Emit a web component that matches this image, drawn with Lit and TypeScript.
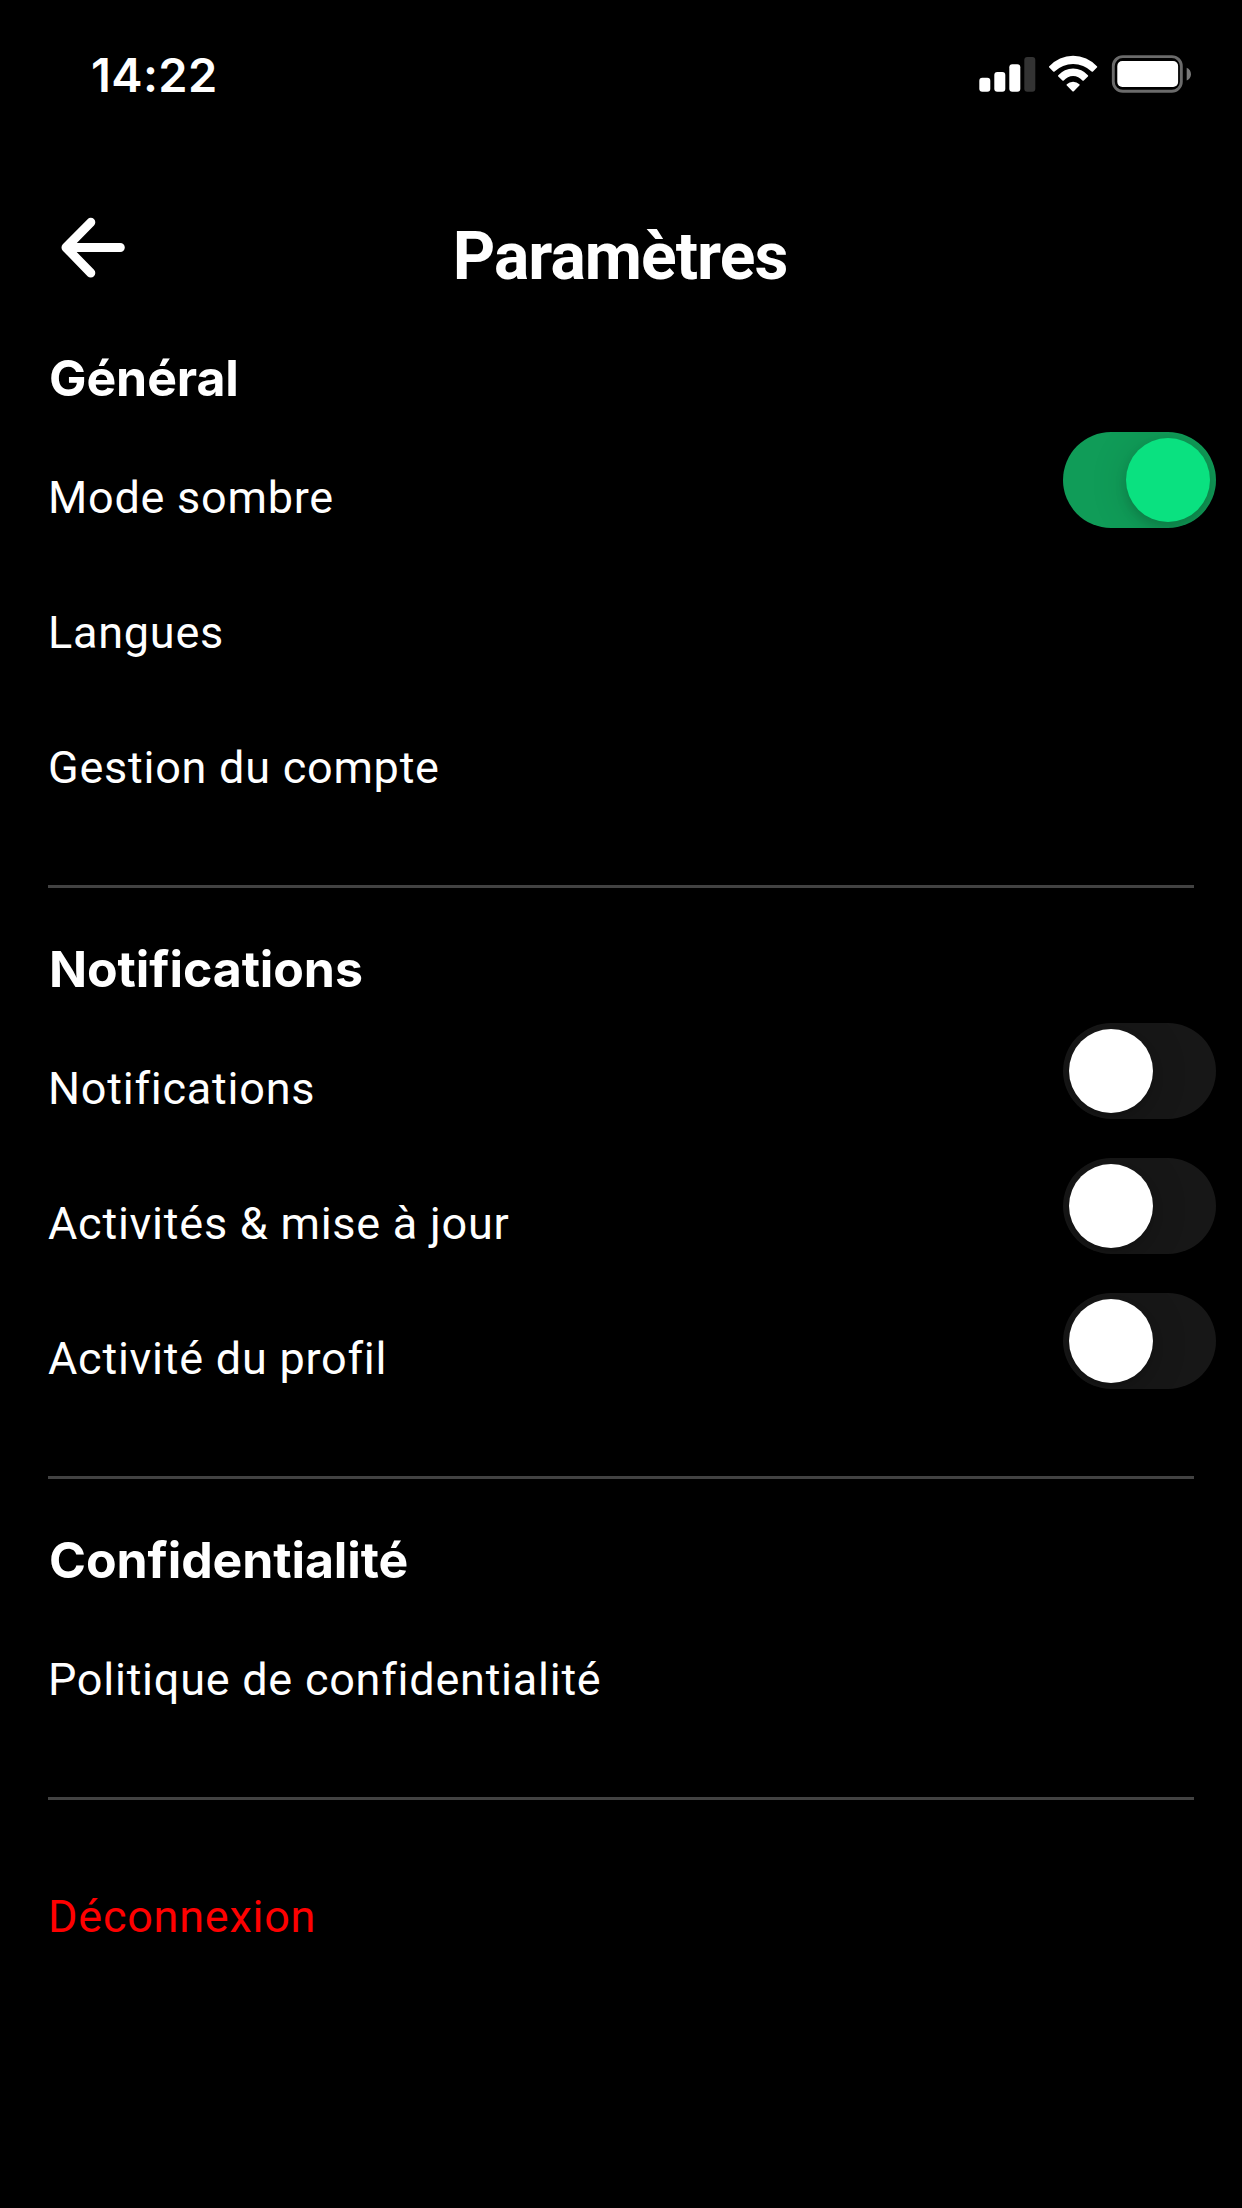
import { LitElement, html, css, nothing } from "lit";
import { customElement, property, state } from "lit/decorators.js";
import { classMap } from "lit/directives/class-map.js";

interface Item {
  label: string;
  on?: boolean;
}

interface Section {
  title: string;
  items: Item[];
}

@customElement("status-bar")
class StatusBar extends LitElement {
  static styles = css`
    :host {
      display: flex;
      justify-content: space-between;
      height: 180px;
      padding: 0 48px 0 91px;
    }
    .time {
      font: 600 47px/60px Inter, sans-serif;
      padding-top: 45px;
      letter-spacing: 0.4px;
    }
    .icons {
      width: 222px;
      height: 48px;
      padding-top: 50px;
      display: block;
    }
  `;

  render() {
    return html`
      <div class="time">14:22</div>
      <svg class="icons" viewBox="972 50 222 48" fill="#fff">
        <rect x="979.3" y="77.8" width="11" height="14" rx="3" />
        <rect x="994.3" y="72" width="11" height="19.800" rx="3" />
        <rect x="1009.3" y="64.200" width="11" height="27.600" rx="3" />
        <rect x="1024.3" y="57" width="11" height="34.800" rx="3" fill="#333" />
        <path d="M1049.3 66.3a32 32 0 0 1 47.6 0a.9.9 0 0 1 0 1.3l-3.9 3.9a1 1 0 0 1-1.4 0a26.8 26.8 0 0 0-37 0a1 1 0 0 1-1.4 0l-3.9-3.9a.9.9 0 0 1 0-1.3z" />
        <path d="M1058.300 75.200a19.500 19.500 0 0 1 29.600 0a.9.9 0 0 1 0 1.300l-4.100 4a1 1 0 0 1-1.400 0a12 12 0 0 0-18.600 0a1 1 0 0 1-1.400 0l-4.100-4a.9.9 0 0 1 0-1.300z" />
        <path d="M1066.800 84.200a9 9 0 0 1 12.600 0a.9.9 0 0 1 0 1.300l-5.600 5.700a1 1 0 0 1-1.400 0l-5.600-5.700a.9.9 0 0 1 0-1.300z" />
        <rect x="1113.300" y="56.600" width="68" height="34.700" rx="9.500" fill="none" stroke="#6b6b6b" stroke-width="2.900" />
        <rect x="1117.300" y="61" width="60.800" height="26" rx="5" />
        <path d="M1186.700 67.800c2.700 1.100 4.300 3.600 4.300 6.400s-1.600 5.300-4.300 6.400z" fill="#777" />
      </svg>
    `;
  }
}

@customElement("toggle-switch")
class ToggleSwitch extends LitElement {
  @property({ type: Boolean }) on = false;

  static styles = css`
    :host {
      display: block;
    }
    .track {
      box-sizing: border-box;
      display: flex;
      width: 153px;
      height: 96px;
      padding: 6px;
      border-radius: 48px;
      background: #171717;
      overflow: hidden;
    }
    .track.on {
      justify-content: flex-end;
      background: #109c58;
    }
    .thumb {
      width: 84px;
      height: 84px;
      border-radius: 50%;
      background: #fff;
      box-shadow: 0 6px 12px rgba(0, 0, 0, 0.15), 0 3px 40px rgba(0, 0, 0, 0.12);
    }
    .on .thumb {
      background: #0ae180;
    }
  `;

  render() {
    return html`<div class=${classMap({ track: true, on: this.on })}>
      <div class="thumb"></div>
    </div>`;
  }
}

@customElement("settings-section")
class SettingsSection extends LitElement {
  @property({ attribute: false }) section!: Section;

  static styles = css`
    :host {
      display: flex;
      flex-direction: column;
    }
    .title {
      margin: 0;
      padding-left: 49px;
      height: 84px;
      font: 700 50px/60px Inter, sans-serif;
      letter-spacing: -0.1px;
    }
    .row {
      display: flex;
      justify-content: space-between;
      align-items: flex-start;
      height: 135px;
      padding: 0 26px 0 48px;
    }
    .label {
      font: 400 45px/60px Roboto, sans-serif;
      letter-spacing: 0.75px;
      padding-top: 36px;
    }
    .rule {
      height: 3px;
      margin: 48px 48px 51px;
      background: #424242;
    }
  `;

  render() {
    const { title, items } = this.section;
    return html`
      <h2 class="title">${title}</h2>
      ${items.map(
        (item) => html`<div class="row">
          <span class="label">${item.label}</span>
          ${item.on === undefined
            ? nothing
            : html`<toggle-switch .on=${item.on}></toggle-switch>`}
        </div>`
      )}
      <div class="rule"></div>
    `;
  }
}

@customElement("app-root")
class AppRoot extends LitElement {
  @state() private sections: Section[] = [
    {
      title: "Général",
      items: [
        { label: "Mode sombre", on: true },
        { label: "Langues" },
        { label: "Gestion du compte" },
      ],
    },
    {
      title: "Notifications",
      items: [
        { label: "Notifications", on: false },
        { label: "Activités & mise à jour", on: false },
        { label: "Activité du profil", on: false },
      ],
    },
    { title: "Confidentialité", items: [{ label: "Politique de confidentialité" }] },
  ];

  static styles = css`
    :host {
      display: flex;
      flex-direction: column;
      width: 1242px;
      height: 2208px;
      overflow: hidden;
      background: #000;
      color: #fff;
    }
    .header {
      display: grid;
      grid-template-columns: 150px 1fr 152px;
      height: 168px;
    }
    .back {
      width: 72px;
      height: 72px;
      margin: 31px 0 0 57px;
    }
    .heading {
      margin: 0;
      padding-top: 37px;
      text-align: center;
      font: 700 66px/80px Roboto, sans-serif;
      letter-spacing: -0.95px;
    }
    .logout {
      padding: 36px 48px 0;
      font: 400 45px/60px Roboto, sans-serif;
      letter-spacing: 0.75px;
      color: #f00;
    }
  `;

  render() {
    return html`
      <status-bar></status-bar>
      <div class="header">
        <svg class="back" viewBox="57 211 72 72" fill="none" stroke="#fff" stroke-width="9" stroke-linecap="round" stroke-linejoin="round">
          <path d="M90.800 222.300 66 247.500 90.800 273M66 247.500H120.300" />
        </svg>
        <h1 class="heading">Paramètres</h1>
      </div>
      ${this.sections.map(
        (s) => html`<settings-section .section=${s}></settings-section>`
      )}
      <div class="logout">Déconnexion</div>
    `;
  }
}
